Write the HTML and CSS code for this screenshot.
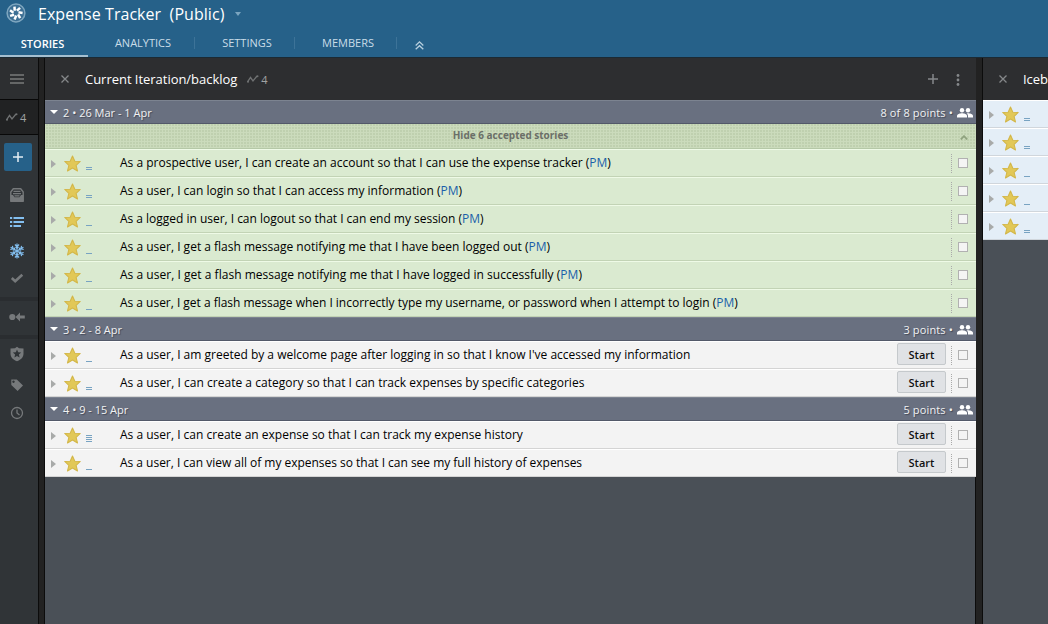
FILE: index.html
```html
<!DOCTYPE html>
<html lang="en">
<head>
<meta charset="utf-8">
<title>Expense Tracker</title>
<link rel="stylesheet" href="styles.css">
</head>
<body>
<svg class="defs" width="0" height="0">
  <symbol id="star" viewBox="0 0 16 16"><path d="M8 .9l2.200 4.900 5.100.3-3.900 3.600 1.300 5.300L8 12.300 3.300 15l1.300-5.300L.7 6.100l5.100-.3z" fill="#e2c857" stroke="#d3b749" stroke-width="1" stroke-linejoin="round"/></symbol>
  <symbol id="people" viewBox="0 0 16 10"><circle cx="5" cy="2.300" r="2.200"/><circle cx="11" cy="2.300" r="2.200"/><path d="M0 9.500V8c0-2 3-2.800 5-2.800S10 6 10 8v1.500z"/><path d="M11 9.500V8c0-1.200-.6-2-1.400-2.700C12 5 16 5.800 16 8v1.500z"/></symbol>
  <symbol id="wave" viewBox="0 0 12 8"><path d="M.5 7l3-4.500 2.500 3.500 4-5" fill="none" stroke="currentColor" stroke-width="1.300"/><circle cx="10.500" cy="1.200" r="1"/><circle cx="1" cy="6.800" r="1"/></symbol>
  <symbol id="close" viewBox="0 0 8 8"><path d="M.5.5l7 7M7.500.5l-7 7" stroke="currentColor" stroke-width="1.300"/></symbol>
</svg>

<header class="top">
  <div class="title-row">
    <svg class="logo" viewBox="0 0 20 20"><circle cx="10" cy="10" r="8.900" fill="#3c6f94" stroke="#7ea6bf" stroke-width="1.500"/><g stroke="#fff" stroke-width="2.500"><path id="petal" d="M8.700 7.800L8.500 3.600"/><use href="#petal" transform="rotate(51.400 10 10)"/><use href="#petal" transform="rotate(102.900 10 10)"/><use href="#petal" transform="rotate(154.300 10 10)"/><use href="#petal" transform="rotate(205.700 10 10)"/><use href="#petal" transform="rotate(257.100 10 10)"/><use href="#petal" transform="rotate(308.600 10 10)"/></g></svg>
    <h1>Expense Tracker&nbsp; (Public)</h1>
    <i class="caret"></i>
  </div>
  <nav class="tabs">
    <a class="tab stories active">STORIES</a>
    <a class="tab analytics">ANALYTICS</a>
    <a class="tab settings">SETTINGS</a>
    <a class="tab members">MEMBERS</a>
    <svg class="collapse" viewBox="0 0 9 9"><path d="M.7 4.500L4.500.9l3.800 3.600M.7 8.300l3.800-3.600 3.800 3.600" fill="none" stroke="#b8d0df" stroke-width="1.300"/></svg>
  </nav>
</header>

<main class="workspace">
  <aside class="sidebar">
    <div class="menu"><svg width="14" height="10"><path d="M0 1h14M0 5h14M0 9h14" stroke="#656767" stroke-width="2"/></svg></div>
    <div class="side-velocity"><svg class="wave"><use href="#wave"/></svg><span>4</span></div>
    <div class="tools">
      <div class="add"><svg width="10" height="10"><path d="M5 0v10M0 5h10" stroke="#e4edf3" stroke-width="1.500"/></svg></div>
      <svg class="ic tray" viewBox="0 0 16 16"><path d="M4.300 1.800h7.400L14.200 5v9.200H1.800V5z" fill="none" stroke="currentColor" stroke-width="1.400" stroke-linejoin="round"/><path d="M1.500 8H4l1.500 2.200h5L12 8h2.500v6.500h-13z" fill="currentColor"/><path d="M4.500 4.300h7M4 6.600h8M5.500 8.800h5" stroke="currentColor" stroke-width="1.200"/></svg>
      <svg class="ic list blue" viewBox="0 0 16 16"><path d="M1 4h2.200M4.500 4H15M1 8h2.200M4.500 8H15M1 12h2.200M4.500 12H12" stroke="currentColor" stroke-width="2"/></svg>
      <svg class="ic snow blue" viewBox="0 0 16 16"><g fill="none" stroke="currentColor" stroke-width="1.150"><g id="arm"><path d="M8 8V.6M5.900 1.500L8 3.600l2.100-2.100M6.500 4L8 5.500 9.500 4"/></g><use href="#arm" transform="rotate(60 8 8)"/><use href="#arm" transform="rotate(120 8 8)"/><use href="#arm" transform="rotate(180 8 8)"/><use href="#arm" transform="rotate(240 8 8)"/><use href="#arm" transform="rotate(300 8 8)"/></g></svg>
      <svg class="ic check" viewBox="0 0 16 16"><path d="M2.800 8l3.400 3.300L13.300 4.700" fill="none" stroke="currentColor" stroke-width="2.600"/></svg>
      <i class="rule"></i>
      <svg class="ic block" viewBox="0 0 16 16"><circle cx="3.300" cy="8" r="3.100" fill="currentColor"/><path d="M6.500 8L11 3.500v3h4.800v3H11v3z" fill="currentColor"/></svg>
      <i class="rule second"></i>
      <svg class="ic shield" viewBox="0 0 16 16"><path fill-rule="evenodd" d="M8 .8l2 1.500 4.500.2v5.300c0 3.800-3 6.200-6.500 7.500C4.500 14 1.500 11.600 1.500 7.800V2.500L6 2.300zM8 3.500L6.800 6.300l-3 .2 2.300 2-.7 3L8 9.900l2.600 1.600-.7-3 2.300-2-3-.2z" fill="currentColor"/></svg>
      <svg class="ic tag" viewBox="0 0 16 16"><path fill-rule="evenodd" d="M2.300 2.500h5.500l6.200 6.100-5.400 5.500-6.300-6.200zM4.500 3.500a1.200 1.200 0 1 0 .01 0z" fill="currentColor"/></svg>
      <svg class="ic clock" viewBox="0 0 16 16"><circle cx="8" cy="8" r="5.500" fill="none" stroke="currentColor" stroke-width="1.300"/><path d="M8 4.500V8l2.500 2" fill="none" stroke="currentColor" stroke-width="1.300"/></svg>
    </div>
  </aside>

  <section class="panel backlog">
    <div class="panel-head"><svg class="close"><use href="#close"/></svg><h2>Current Iteration/backlog</h2><svg class="wave"><use href="#wave"/></svg><span class="vel">4</span>
      <svg class="plus" viewBox="0 0 10 10"><path d="M5 0v10M0 5h10" stroke="currentColor" stroke-width="1.500"/></svg><svg class="dots" viewBox="0 0 4 12"><circle cx="2" cy="1.500" r="1.400"/><circle cx="2" cy="6" r="1.400"/><circle cx="2" cy="10.500" r="1.400"/></svg></div>

    <div class="iteration"><i class="down"></i><span>2 • 26 Mar - 1 Apr</span><span class="pts">8 of 8 points •</span><svg class="people"><use href="#people"/></svg></div>
    <div class="accepted"><span>Hide 6 accepted stories</span><svg class="up" viewBox="0 0 8 5"><path d="M.8 4.400L4 1.200l3.200 3.200" fill="none" stroke="#8fa27f" stroke-width="1.800"/></svg></div>
    <div class="row done"><i class="right"></i><svg class="star"><use href="#star"/></svg><i class="est e2"></i><p>As a prospective user, I can create an account so that I can use the expense tracker (<b>PM</b>)</p><span class="sel"><i class="box"></i></span></div>
    <div class="row done"><i class="right"></i><svg class="star"><use href="#star"/></svg><i class="est e2"></i><p>As a user, I can login so that I can access my information (<b>PM</b>)</p><span class="sel"><i class="box"></i></span></div>
    <div class="row done"><i class="right"></i><svg class="star"><use href="#star"/></svg><i class="est"></i><p class="tight">As a logged in user, I can logout so that I can end my session (<b>PM</b>)</p><span class="sel"><i class="box"></i></span></div>
    <div class="row done"><i class="right"></i><svg class="star"><use href="#star"/></svg><i class="est"></i><p>As a user, I get a flash message notifying me that I have been logged out (<b>PM</b>)</p><span class="sel"><i class="box"></i></span></div>
    <div class="row done"><i class="right"></i><svg class="star"><use href="#star"/></svg><i class="est"></i><p class="loose">As a user, I get a flash message notifying me that I have logged in successfully (<b>PM</b>)</p><span class="sel"><i class="box"></i></span></div>
    <div class="row done"><i class="right"></i><svg class="star"><use href="#star"/></svg><i class="est"></i><p class="tight">As a user, I get a flash message when I incorrectly type my username, or password when I attempt to login (<b>PM</b>)</p><span class="sel"><i class="box"></i></span></div>

    <div class="iteration"><i class="down"></i><span>3 • 2 - 8 Apr</span><span class="pts">3 points •</span><svg class="people"><use href="#people"/></svg></div>
    <div class="row"><i class="right"></i><svg class="star"><use href="#star"/></svg><i class="est"></i><p>As a user, I am greeted by a welcome page after logging in so that I know I've accessed my information</p><button>Start</button><span class="sel"><i class="box"></i></span></div>
    <div class="row"><i class="right"></i><svg class="star"><use href="#star"/></svg><i class="est e2"></i><p class="loose">As a user, I can create a category so that I can track expenses by specific categories</p><button>Start</button><span class="sel"><i class="box"></i></span></div>

    <div class="iteration"><i class="down"></i><span>4 • 9 - 15 Apr</span><span class="pts">5 points •</span><svg class="people"><use href="#people"/></svg></div>
    <div class="row"><i class="right"></i><svg class="star"><use href="#star"/></svg><i class="est e4"></i><p>As a user, I can create an expense so that I can track my expense history</p><button>Start</button><span class="sel"><i class="box"></i></span></div>
    <div class="row"><i class="right"></i><svg class="star"><use href="#star"/></svg><i class="est"></i><p class="tight">As a user, I can view all of my expenses so that I can see my full history of expenses</p><button>Start</button><span class="sel"><i class="box"></i></span></div>
  </section>

  <section class="panel icebox">
    <div class="panel-head"><svg class="close"><use href="#close"/></svg><h2>Iceb</h2></div>
    <div class="row ice"><i class="right"></i><svg class="star"><use href="#star"/></svg><i class="est e2"></i></div>
    <div class="row ice"><i class="right"></i><svg class="star"><use href="#star"/></svg><i class="est e2"></i></div>
    <div class="row ice"><i class="right"></i><svg class="star"><use href="#star"/></svg><i class="est"></i></div>
    <div class="row ice"><i class="right"></i><svg class="star"><use href="#star"/></svg><i class="est"></i></div>
    <div class="row ice"><i class="right"></i><svg class="star"><use href="#star"/></svg><i class="est e2"></i></div>
  </section>
</main>
</body>
</html>
```
FILE: styles.css
```css
* { box-sizing: border-box; }
body { margin: 0; width: 1048px; height: 624px; overflow: hidden; display: flex; flex-direction: column; font: 12px "Open Sans", "Noto Sans", sans-serif; background: #222; }
h1, h2, p { margin: 0; font-weight: 400; white-space: nowrap; }
svg { display: block; flex: none; fill: currentColor; }
i { display: block; flex: none; }
.defs { display: none; }

.top { height: 57px; flex: none; background: #266189; display: flex; flex-direction: column; }
.title-row { height: 29px; display: flex; align-items: center; padding-left: 6px; }
.logo { width: 20px; height: 20px; margin-top: -3px; }
h1 { font-size: 16px; color: #fff; margin: -2px 0 0 12px; line-height: 28px; letter-spacing: .05px; }
.caret { margin: -2px 0 0 11px; border: 3.5px solid transparent; border-top: 4px solid #7ba5c0; border-bottom: 0; }
.tabs { height: 28px; display: flex; align-items: center; }
.tab { height: 12px; display: flex; align-items: center; justify-content: center; color: #cadde8; font-size: 11px; margin-top: -1px; padding-bottom: 1px; border-right: 1px solid #3d7398; }
.active { height: 28px; margin-top: 0; padding: 2px 3px 0 0; border-bottom: 2px solid #a5bfd0; color: #fff; font-weight: 600; border-right: 0; }
.stories { width: 88px; }
.analytics { width: 107px; padding-left: 4px; }
.settings { width: 100px; padding-left: 5px; }
.members { width: 102px; padding-left: 5px; }
.collapse { width: 9px; height: 9px; margin: 4px 0 0 18px; }

.workspace { flex: 1; display: flex; border-top: 1px solid #1b2a34; }
.sidebar { width: 39px; border-right: 1px solid #0c0c0c; background: #303437; color: #777b7d; display: flex; flex-direction: column; }
.menu { height: 42px; background: #2d2f31; border-bottom: 1px solid #080808; display: flex; align-items: center; padding-left: 10px; }
.side-velocity { height: 35px; background: #212223; border-bottom: 1px solid #080808; display: flex; align-items: center; gap: 2px; padding-left: 6px; font-size: 11px; color: #a0a2a3; }
.wave { width: 12px; height: 8px; color: #707273; }
.tools { display: flex; flex-direction: column; align-items: center; padding: 8px 3px 0 0; }
.add { width: 28px; height: 28px; border-radius: 2px; background: #266189; display: flex; align-items: center; justify-content: center; margin-bottom: 16px; }
.ic { width: 16px; height: 16px; color: #76797b; margin-left: -2px; }
.blue { color: #83bff0; }
.list { margin-top: 11px; }
.snow { margin-top: 13px; }
.check { margin-top: 11px; }
.rule { width: 38px; height: 4px; background: #2a2d30; margin: 11px -3px 8px 0; }
.second { margin-top: 10px; margin-bottom: 7px; }
.tag { margin-top: 15px; }
.clock { margin-top: 12px; }

.panel { flex: none; background: #4a5057; display: flex; flex-direction: column; }
.backlog { width: 932px; margin-left: 5px; border-left: 1px solid #0c0c0c; border-right: 1px solid #0c0c0c; }
.backlog > * { width: 931px; }
.icebox { width: 66px; margin-left: 6px; border-left: 1px solid #0c0c0c; overflow: hidden; }
.panel-head { height: 42px; flex: none; background: #2d2e30; display: flex; align-items: center; padding-left: 16px; color: #85888a; }
.close { width: 8px; height: 8px; }
h2 { font-size: 13px; color: #fff; margin-left: 16px; letter-spacing: -.03px; }
.panel-head .wave { margin-left: 10px; }
.vel { font-size: 11px; margin-left: 2px; color: #a0a2a3; }
.plus { width: 10px; height: 10px; margin-left: auto; }
.dots { width: 4px; height: 12px; margin: 1px 16px 0 18px; }

.iteration { height: 24px; flex: none; background: #697080; border-top: 1px solid #7c8390; border-bottom: 1px solid #535969; color: #f1f2f3; font-size: 11px; text-shadow: 1px 1px 1px #444957; display: flex; align-items: center; padding: 1px 3px 0 5px; }
.down { border: 4px solid transparent; border-top-color: #fff; border-bottom: 0; margin: -2px 5px 0 0; }
.pts { margin-left: auto; margin-right: 4px; letter-spacing: .14px; }
.people { width: 16px; height: 10px; color: #fff; }
.accepted { height: 25px; flex: none; padding-bottom: 2px; background: repeating-linear-gradient(0deg, #cbdbbc 0 1px, transparent 1px 3px), repeating-linear-gradient(90deg, #cbdbbc 0 1px, #bfd0af 1px 3px); border-bottom: 1px solid #b5c8a7; display: flex; align-items: center; justify-content: center; color: #6b6f68; font-size: 10px; font-weight: 700; position: relative; }
.up { position: absolute; right: 8px; top: 11px; width: 8px; height: 5px; }

.row { height: 28px; flex: none; background: #f3f3f3; border-top: 1px solid #fff; border-bottom: 1px solid #d4d4d4; display: flex; align-items: center; padding-left: 6px; color: #000; }
.done { background: #daead0; border-top-color: #eefae6; border-bottom-color: #c2d3b5; }
.ice { background: #e4eef7; border-bottom-color: #d0d6dc; }
.right { border: 4px solid transparent; border-left: 5px solid #a8aaa9; border-right: 0; margin-top: 2px; }
.star { width: 17px; height: 17px; margin-left: 8px; }
.est { width: 6px; height: 9px; margin: 6px 28px 0 5px; background: linear-gradient(#78a3c2, #78a3c2) 0 7px / 6px 1px no-repeat; }
.e2 { background: linear-gradient(#78a3c2 0 1px, transparent 1px 2px, #78a3c2 2px) 0 5px / 6px 3px no-repeat; }
.e4 { background: repeating-linear-gradient(#78a3c2 0 1px, transparent 1px 2px) 0 1px / 6px 7px no-repeat; }
.row b { font-weight: 400; color: #1b5faa; }
.row p { flex: 1; margin-top: -2px; }
.row .tight { letter-spacing: -.02px; }
.row .loose { letter-spacing: .027px; }
button { width: 49px; height: 22px; flex: none; padding: 0; border: 1px solid #c5c9cc; border-radius: 2px; background: #e0e2e5; color: #111; font: 600 11px "Open Sans", sans-serif; margin: -2px 5px 0 0; }
.sel { width: 25px; height: 19px; border-left: 1px dotted #aaa; display: flex; align-items: center; padding-left: 6px; }
.box { width: 10px; height: 10px; border: 1px solid #b1b1b1; background: #f4f4f4; }
```
